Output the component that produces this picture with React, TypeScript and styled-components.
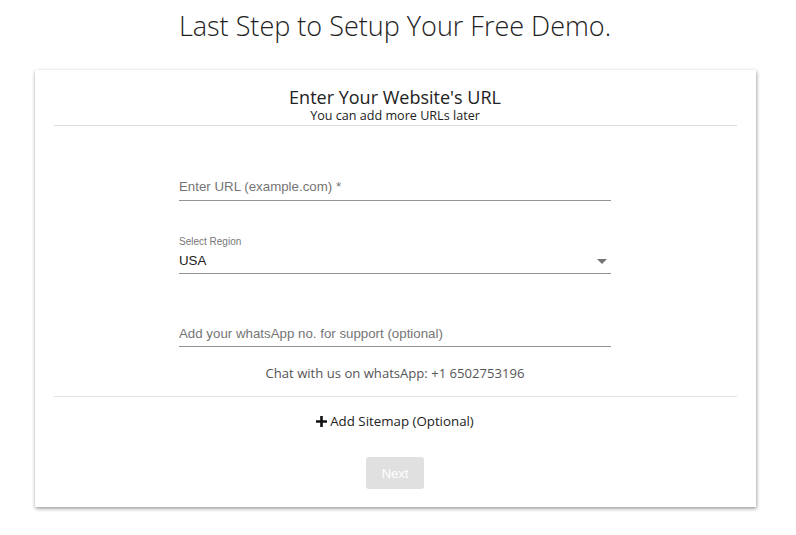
import React from "react";
import styled, { createGlobalStyle } from "styled-components";

const Global = createGlobalStyle`
  html, body { margin: 0; padding: 0; background: #fff; }
  body { font-family: "Open Sans", sans-serif; }
  * { box-sizing: border-box; }
`;

const Page = styled.div`
  display: flex;
  flex-direction: column;
  align-items: center;
  padding-top: 8px;
  padding-right: 6px;
  padding-bottom: 20px;
`;

const Title = styled.h1`
  margin: 0;
  font-family: "Open Sans", sans-serif;
  font-weight: 300;
  font-size: 27px;
  line-height: 36px;
  color: #222;
`;

const Card = styled.div`
  margin-top: 26px;
  width: 721px;
  height: 437px;
  background: #fff;
  box-shadow: 0 1px 3px rgba(0, 0, 0, 0.25), 1px 2px 4px rgba(0, 0, 0, 0.22);
  padding: 0 19px;
  display: flex;
  flex-direction: column;
  align-items: center;
`;

const Header = styled.div`
  width: 100%;
  padding-top: 17px;
  padding-bottom: 2px;
  border-bottom: 1px solid #ddd;
  text-align: center;
  color: #222;
`;

const HeaderTitle = styled.div`
  font-size: 18px;
  line-height: 20px;
`;

const HeaderSub = styled.div`
  margin-top: 1px;
  font-size: 12.6px;
  line-height: 15px;
  color: #222;
`;

const Form = styled.div`
  width: 432px;
  display: flex;
  flex-direction: column;
`;

const Field = styled.div<{ $top: number }>`
  margin-top: ${(p) => p.$top}px;
  border-bottom: 1px solid #949494;
  display: flex;
  flex-direction: column;
  font-family: "Liberation Sans", Arial, sans-serif;
`;

const Placeholder = styled.div<{ $shift?: number }>`
  font-size: 13.3px;
  line-height: 18px;
  padding-top: ${(p) => p.$shift ?? 0}px;
  padding-bottom: ${(p) => 4 - (p.$shift ?? 0)}px;
  color: #757575;
`;

const SmallLabel = styled.div`
  font-size: 10px;
  line-height: 12px;
  margin-top: 1px;
  margin-bottom: -1px;
  color: #777;
`;

const SelectRow = styled.div`
  display: flex;
  align-items: center;
  justify-content: space-between;
  font-size: 13.3px;
  line-height: 18px;
  padding-top: 5px;
  padding-bottom: 3px;
  color: #222;
`;

const Caret = styled.span`
  width: 0;
  height: 0;
  border-left: 5px solid transparent;
  border-right: 5px solid transparent;
  border-top: 5px solid #757575;
  margin-right: 4px;
`;

const Chat = styled.div`
  margin-top: 16px;
  font-size: 13.1px;
  line-height: 20px;
  color: #555;
  text-align: center;
`;

const Divider = styled.div`
  width: 100%;
  margin-top: 13px;
  border-top: 1px solid #e3e3e3;
`;

const AddLink = styled.div`
  margin-top: 14px;
  display: flex;
  align-items: center;
  gap: 3px;
  font-size: 13.3px;
  line-height: 20px;
  color: #222;
`;

const NextButton = styled.button`
  margin-top: 26px;
  width: 58px;
  height: 32px;
  border: none;
  border-radius: 3px;
  background: #e0e0e0;
  color: #fff;
  font-family: "Liberation Sans", Arial, sans-serif;
  font-size: 13px;
  padding: 0;
`;

export default function App() {
  return (
    <>
      <Global />
      <Page>
        <Title>Last Step to Setup Your Free Demo.</Title>
        <Card>
          <Header>
            <HeaderTitle>Enter Your Website's URL</HeaderTitle>
            <HeaderSub>You can add more URLs later</HeaderSub>
          </Header>
          <Form>
            <Field $top={52}>
              <Placeholder>Enter URL (example.com) *</Placeholder>
            </Field>
            <Field $top={34}>
              <SmallLabel>Select Region</SmallLabel>
              <SelectRow>
                <span>USA</span>
                <Caret />
              </SelectRow>
            </Field>
            <Field $top={50}>
              <Placeholder $shift={1}>Add your whatsApp no. for support (optional)</Placeholder>
            </Field>
          </Form>
          <Chat>Chat with us on whatsApp: +1 6502753196</Chat>
          <Divider />
          <AddLink>
            <svg width="11" height="11" viewBox="0 0 11 11">
              <path d="M4.2 0h2.6v4.2H11v2.6H6.8V11H4.2V6.8H0V4.2h4.2z" fill="#111" />
            </svg>
            <span>Add Sitemap (Optional)</span>
          </AddLink>
          <NextButton>Next</NextButton>
        </Card>
      </Page>
    </>
  );
}
